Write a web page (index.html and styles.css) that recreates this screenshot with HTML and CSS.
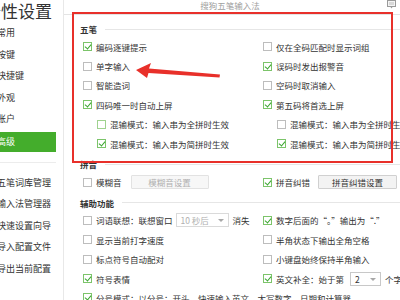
FILE: index.html
```html
<!DOCTYPE html>
<html lang="zh-CN">
<head>
<meta charset="utf-8">
<link rel="stylesheet" href="styles.css">
</head>
<body>
<div class="app">
  <aside class="sidebar">
    <div class="title">个性设置</div>
    <ul class="nav">
      <li>常用</li>
      <li>按键</li>
      <li>快捷键</li>
      <li>外观</li>
      <li>账户</li>
      <li class="active">高级</li>
    </ul>
    <div class="nav-divider"></div>
    <ul class="nav">
      <li>五笔词库管理</li>
      <li>输入法管理器</li>
      <li>快速设置向导</li>
      <li>导入配置文件</li>
      <li>导出当前配置</li>
    </ul>
  </aside>
  <main class="main">
    <header class="topbar">
      <span class="wintitle">搜狗五笔输入法</span>
      <svg class="topicon" width="9" height="9" viewBox="0 0 9 9"><rect x="0.5" y="0.5" width="8" height="6" fill="#f4f4f4" stroke="#9a9a9a"/><rect x="2" y="2" width="5" height="3" fill="#d8d8d8"/><path d="M3.5 7 L5.5 7 L4.5 8.5 Z" fill="#9a9a9a"/></svg>
    </header>

    <section class="group">
      <h3 class="ghead"><span>五笔</span></h3>
      <div class="grid">
        <label class="opt"><i class="cb on"></i>编码逐键提示</label>
        <label class="opt"><i class="cb"></i>仅在全码匹配时显示词组</label>
        <label class="opt"><i class="cb"></i>单字输入</label>
        <label class="opt"><i class="cb on"></i>误码时发出报警音</label>
        <label class="opt"><i class="cb"></i>智能造词</label>
        <label class="opt"><i class="cb"></i>空码时取消输入</label>
        <label class="opt"><i class="cb on"></i>四码唯一时自动上屏</label>
        <label class="opt"><i class="cb on"></i>第五码将首选上屏</label>
        <label class="opt sub"><i class="cb hover"></i>混输模式：输入串为全拼时生效</label>
        <label class="opt sub"><i class="cb"></i>混输模式：输入串为全拼时生效</label>
        <label class="opt sub"><i class="cb on"></i>混输模式：输入串为简拼时生效</label>
        <label class="opt sub"><i class="cb on"></i>混输模式：输入串为简拼时生效</label>
      </div>
    </section>

    <section class="group">
      <h3 class="ghead"><span>拼音</span></h3>
      <div class="grid">
        <div class="opt"><i class="cb"></i>模糊音<button class="btn disabled w1">模糊音设置</button></div>
        <div class="opt"><i class="cb on"></i>拼音纠错<button class="btn w2">拼音纠错设置</button></div>
      </div>
    </section>

    <section class="group">
      <h3 class="ghead"><span>辅助功能</span></h3>
      <div class="grid">
        <div class="opt"><i class="cb"></i>词语联想：联想窗口<span class="select disabled s1">10 秒后<b class="caret"></b></span>消失</div>
        <div class="opt"><i class="cb on"></i>数字后面的“。”输出为“.”</div>
        <div class="opt"><i class="cb"></i>显示当前打字速度</div>
        <div class="opt"><i class="cb"></i>半角状态下输出全角空格</div>
        <div class="opt"><i class="cb"></i>标点符号自动配对</div>
        <div class="opt"><i class="cb"></i>小键盘始终保持半角输入</div>
        <div class="opt"><i class="cb on"></i>符号表情</div>
        <div class="opt"><i class="cb on"></i>英文补全：始于第<span class="select s2">2<b class="caret"></b></span>个字符</div>
        <div class="opt wide"><i class="cb on"></i>分号模式：以分号；开头，快速输入英文、大写数字、日期和计算器</div>
      </div>
    </section>
  </main>
</div>
<div class="redbox"></div>
<svg class="arrow" width="400" height="300" viewBox="0 0 400 300">
  <polygon points="136,70 151,63 149,68.5 220,74.5 219.5,77.5 148.5,73 147,78" fill="#e8302a"/>
</svg>
</body>
</html>
```
FILE: styles.css
```css
* { box-sizing: border-box; }
html, body { margin: 0; padding: 0; }
body {
  width: 400px;
  height: 300px;
  overflow: hidden;
  background: #fff;
  font-family: "Noto Sans CJK SC", "Microsoft YaHei", sans-serif;
  font-size: 8.5px;
  color: #333;
  position: relative;
}
.app { display: flex; height: 300px; }

.sidebar {
  width: 64px;
  flex: none;
  border-right: 1px solid #e8e8e8;
  overflow: hidden;
}
.title {
  font-size: 17px;
  line-height: 22px;
  margin-left: -16px;
  white-space: nowrap;
  color: #333;
  height: 22px;
}
.nav { list-style: none; margin: 0; padding: 0; }
.nav li {
  height: 21.5px;
  line-height: 21.5px;
  white-space: nowrap;
  margin-left: -3px;
  padding-left: 0;
  font-size: 9px;
}
.nav li.active {
  margin-top: 2px;
  height: 20px;
  line-height: 20px;
  width: 59px;
  background: #44ad2c;
  color: #fff;
}
.nav-divider {
  height: 1px;
  width: 56px;
  background: #ececec;
  margin: 10px 0 9px;
}

.main { flex: 1; min-width: 0; position: relative; }
.topbar {
  height: 15px;
  border-bottom: 1px solid #e4e4e4;
  display: flex;
  justify-content: center;
  align-items: flex-start;
  position: relative;
}
.wintitle { color: #a0a0a0; font-size: 8.5px; line-height: 10px; margin-left: -4px; }
.topicon { position: absolute; right: 4px; top: 0; }

.group { padding-left: 16px; }
.group + .group { margin-top: 3px; }
.group:first-of-type { margin-top: 6px; }
.ghead {
  margin: 0;
  height: 16px;
  display: flex;
  align-items: center;
  font-size: 8.5px;
  font-weight: bold;
  color: #333;
}
.ghead::after {
  content: "";
  flex: 1;
  height: 1px;
  background: #e6e6e6;
  margin-left: 8px;
}
.grid {
  display: grid;
  grid-template-columns: 180px 1fr;
  padding-left: 3px;
}
.opt {
  height: 19.4px;
  display: flex;
  align-items: center;
  white-space: nowrap;
}
.opt.sub { padding-left: 14px; }
.opt.wide { grid-column: 1 / 3; }
.cb {
  width: 9px;
  height: 9px;
  border: 1px solid #bdbdbd;
  background: #fff;
  margin-right: 4px;
  flex: none;
  position: relative;
}
.cb.hover { border-color: #9fd28f; }
.cb.on { border-color: #7cc46a; }
.cb.on::after {
  content: "";
  position: absolute;
  left: 2px;
  top: 0px;
  width: 3px;
  height: 5px;
  border: solid #3aa52f;
  border-width: 0 1.5px 1.5px 0;
  transform: rotate(40deg);
}
.btn {
  font: inherit;
  height: 14px;
  padding: 0;
  border: 1px solid #d0d0d0;
  background: #f3f3f3;
  color: #333;
  border-radius: 1px;
  margin-left: 9px;
}
.btn.disabled { color: #b0b0b0; border-color: #e2e2e2; background: #f7f7f7; }
.btn.w1 { width: 78px; }
.btn.w2 { width: 79px; margin-left: 8px; }
.select {
  display: inline-flex;
  align-items: center;
  height: 14px;
  border: 1px solid #c8c8c8;
  padding-left: 4px;
  position: relative;
  margin: 0 4px 0 2px;
}
.select.disabled { color: #b0b0b0; border-color: #dadada; }
.select.s1 { width: 53px; margin-left: 3px; }
.select.s2 { width: 31px; margin-left: 6px; }
.caret {
  position: absolute;
  right: 4px;
  top: 5px;
  width: 0; height: 0;
  border-left: 3px solid transparent;
  border-right: 3px solid transparent;
  border-top: 3px solid #a8a8a8;
}
.redbox {
  position: absolute;
  left: 72px;
  top: 12px;
  width: 321px;
  height: 151px;
  border: 2px solid #e8302a;
  pointer-events: none;
}
.arrow { position: absolute; left: 0; top: 0; pointer-events: none; }
```
